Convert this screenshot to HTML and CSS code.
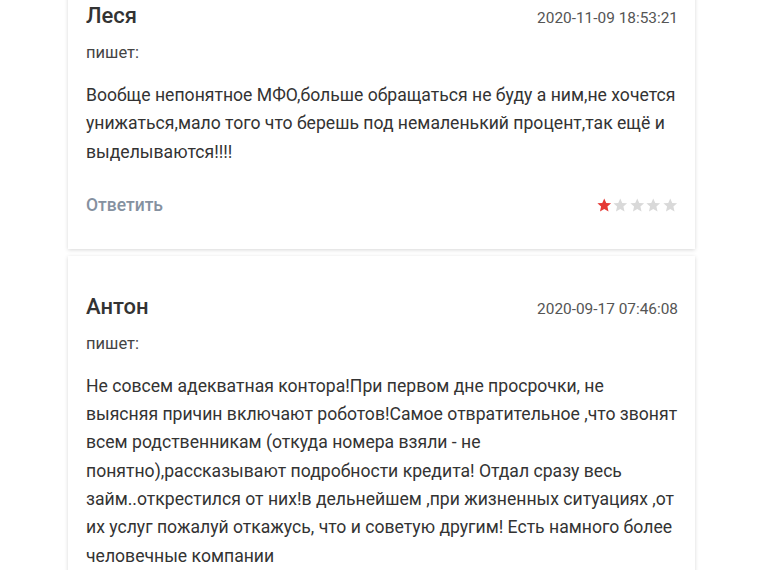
FILE: index.html
```html
<!DOCTYPE html>
<html lang="ru">
<head>
<meta charset="utf-8">
<link rel="stylesheet" href="styles.css">
</head>
<body>
<div class="list">
  <div class="card first">
    <div class="head">
      <span class="name">Леся</span>
      <span class="date">2020-11-09 18:53:21</span>
    </div>
    <div class="writes">пишет:</div>
    <div class="text">Вообще непонятное МФО,больше обращаться не буду а ним,не хочется унижаться,мало того что берешь под немаленький процент,так ещё и выделываются!!!!</div>
    <div class="foot">
      <span class="reply">Ответить</span>
      <span class="stars">
        <svg class="star on" viewBox="0 0 24 24"><path d="M12 2l2.9 6.6 7.1.6-5.4 4.7 1.6 7.1L12 17.3 5.8 21l1.6-7.1L2 9.2l7.1-.6z"/></svg><svg class="star" viewBox="0 0 24 24"><path d="M12 2l2.9 6.6 7.1.6-5.4 4.7 1.6 7.1L12 17.3 5.8 21l1.6-7.1L2 9.2l7.1-.6z"/></svg><svg class="star" viewBox="0 0 24 24"><path d="M12 2l2.9 6.6 7.1.6-5.4 4.7 1.6 7.1L12 17.3 5.8 21l1.6-7.1L2 9.2l7.1-.6z"/></svg><svg class="star" viewBox="0 0 24 24"><path d="M12 2l2.9 6.6 7.1.6-5.4 4.7 1.6 7.1L12 17.3 5.8 21l1.6-7.1L2 9.2l7.1-.6z"/></svg><svg class="star" viewBox="0 0 24 24"><path d="M12 2l2.9 6.6 7.1.6-5.4 4.7 1.6 7.1L12 17.3 5.8 21l1.6-7.1L2 9.2l7.1-.6z"/></svg>
      </span>
    </div>
  </div>
  <div class="card">
    <div class="head">
      <span class="name">Антон</span>
      <span class="date">2020-09-17 07:46:08</span>
    </div>
    <div class="writes">пишет:</div>
    <div class="text">Не совсем адекватная контора!При первом дне просрочки, не выясняя причин включают роботов!Самое отвратительное ,что звонят всем родственникам (откуда номера взяли - не понятно),рассказывают подробности кредита! Отдал сразу весь займ..открестился от них!в дельнейшем ,при жизненных ситуациях ,от их услуг пожалуй откажусь, что и советую другим! Есть намного более человечные компании</div>
  </div>
</div>
</body>
</html>
```
FILE: styles.css
```css
html, body {
  margin: 0;
  padding: 0;
  background: #fff;
  overflow: hidden;
}
body {
  font-family: Roboto, "Noto Sans", sans-serif;
  color: #333;
}
.list {
  width: 627px;
  margin-left: 68px;
  display: flex;
  flex-direction: column;
  gap: 7px;
}
.card {
  background: #fff;
  box-shadow: 0 1px 4px rgba(0, 0, 0, 0.16);
  padding: 37px 17px 34px 18px;
}
.card.first {
  margin-top: -35px;
}
.head {
  display: flex;
  justify-content: space-between;
  align-items: baseline;
  height: 28px;
}
.name {
  font-size: 22px;
  font-weight: 500;
  line-height: 28px;
  color: #333;
}
.date {
  font-size: 15.4px;
  color: #555;
}
.writes {
  margin-top: 13px;
  font-size: 16.5px;
  line-height: 20px;
  color: #444;
}
.text {
  margin-top: 18px;
  font-size: 17.6px;
  line-height: 28.3px;
  color: #333;
}
.foot {
  margin-top: 29px;
  height: 20px;
  display: flex;
  justify-content: space-between;
  align-items: center;
}
.reply {
  font-size: 17.5px;
  font-weight: 500;
  color: #8591a0;
}
.stars {
  display: flex;
  gap: 0;
  margin-right: 0;
}
.star {
  width: 16.5px;
  height: 16.5px;
  fill: #d9d9d9;
}
.star.on {
  fill: #e53935;
}
```
